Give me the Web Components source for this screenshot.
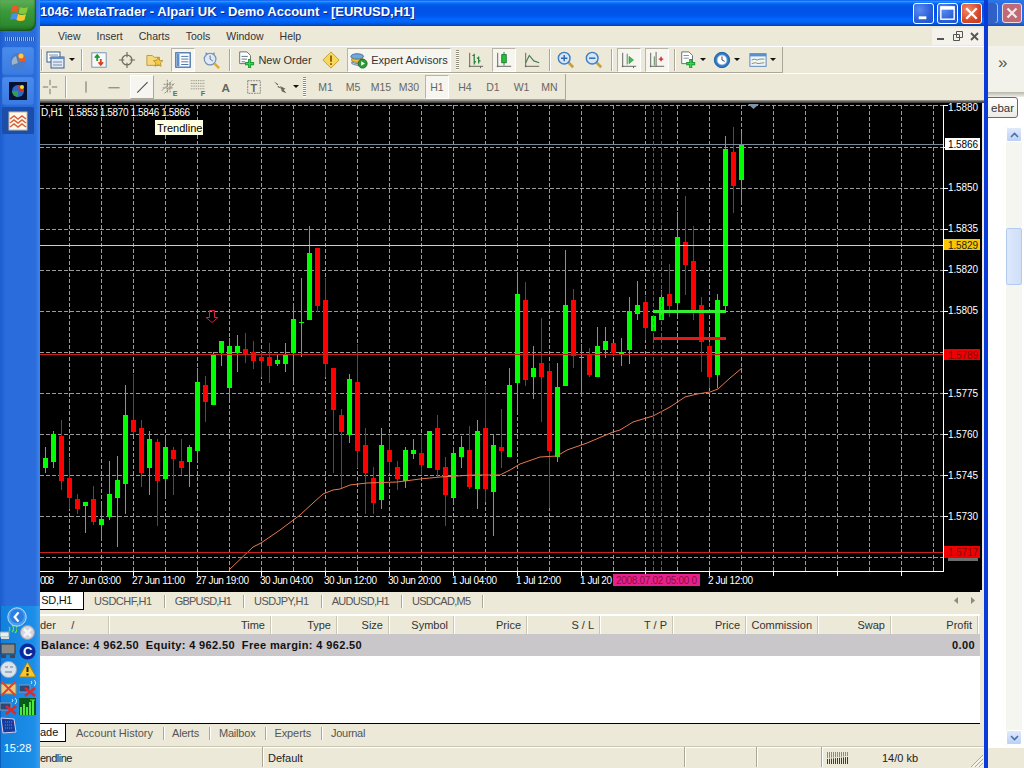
<!DOCTYPE html>
<html><head><meta charset="utf-8"><title>MetaTrader</title>
<style>
html,body{margin:0;padding:0;width:1024px;height:768px;overflow:hidden;background:#ece9d8;font:11px "Liberation Sans",Arial,sans-serif;color:#000}
</style></head><body>
<script>
const I={
profile:`<rect x="1" y="2" width="13" height="10" fill="#fff" stroke="#3b5f8f"/><path d="M3 5h9M3 8h9" stroke="#7a8aa0"/><rect x="5" y="7" width="13" height="11" fill="#dfeaf8" stroke="#3b5f8f"/><rect x="5" y="7" width="13" height="2" fill="#5b8fd0"/><path d="M7 12h9M7 15h9" stroke="#7a8aa0"/>`,
market:`<rect x="2" y="2" width="16" height="16" fill="#f8f8f4" stroke="#6c8fb8"/><path d="M8 11V5M5.5 7.5L8 4.5l2.5 3" stroke="#1d9a3a" stroke-width="2" fill="none"/><path d="M12 9v6M9.5 12.5L12 15.5l2.5-3" stroke="#d8402a" stroke-width="2" fill="none"/>`,
cross:`<circle cx="10" cy="10" r="5.5" fill="none" stroke="#6d6d64" stroke-width="1.4"/><path d="M10 1v6M10 13v6M1 10h6M13 10h6" stroke="#6d6d64" stroke-width="1.3"/>`,
nav:`<path d="M1 5h6l2 2h6v9H1z" fill="#f6d97a" stroke="#b8963a"/><path d="M13.5 7l1.6 3.4 3.7.4-2.8 2.5.8 3.7-3.3-1.9-3.3 1.9.8-3.7L8.2 10.800l3.700-.4z" fill="#f6c93c" stroke="#a8842a" stroke-width=".8"/>`,
term:`<rect x="2" y="2" width="16" height="16" fill="#fff" stroke="#3f6ea8" stroke-width="1.4"/><rect x="3" y="3" width="3" height="14" fill="#5f8fc8"/><path d="M8 6h8M8 9h8M8 12h8M8 15h8" stroke="#3f6ea8"/>`,
tester:`<circle cx="9" cy="9" r="6.500" fill="#dfe8f4" stroke="#7090b8" stroke-width="1.300"/><path d="M9 5v4l3 2" stroke="#4a6a90" fill="none"/><path d="M4 2l2 2M14 2l-2 2" stroke="#7090b8" stroke-width="1.500"/><path d="M14 14l5 5" stroke="#d9a93a" stroke-width="2.500"/>`,
neworder:`<path d="M3 1h8l4 4v9H3z" fill="#fff" stroke="#5a6a70"/><path d="M5 6h7M5 9h6M5 12h4" stroke="#5a6a70"/><path d="M14 9v10M9 14h10" stroke="#1c9a34" stroke-width="3.400"/><path d="M14 10v8M10 14h8" stroke="#38d84e" stroke-width="1.400"/>`,
diamond:`<path d="M10 1l9 9-9 9-9-9z" fill="#f8d85a" stroke="#c59a2a"/><path d="M10 5v7" stroke="#8a5a10" stroke-width="2"/><rect x="9" y="13.500" width="2" height="2" fill="#8a5a10"/>`,
ea:`<ellipse cx="8" cy="6" rx="7" ry="3" fill="#6fa8dc" stroke="#3a6a9a"/><path d="M2 8c3 2 9 2 12 0v3c-3 2-9 2-12 0z" fill="#f1c63c" stroke="#a8842a"/><path d="M2 12c3 2 7 2 8 2v2c-3 0-6-1-8-2z" fill="#c9d6e4" stroke="#5a7a9a"/><circle cx="14" cy="14" r="5" fill="#2c9a38" stroke="#1d6a28"/><path d="M12.500 11.500v5l4-2.500z" fill="#fff"/>`,
bars:`<path d="M2 17h16M3 2v16M15 17v2" stroke="#5a5a50"/><path d="M8 3v12M6 5h2M8 12h2M13 6v8M11 8h2M13 11h2" stroke="#1c7a30" stroke-width="1.300"/>`,
candle:`<path d="M2 17h16M3 2v16" stroke="#5a5a50"/><path d="M10 1v15" stroke="#1c7a30"/><rect x="7.500" y="4" width="5" height="9" fill="#28c038" stroke="#1c7a30"/>`,
line:`<path d="M2 17h16M3 2v16" stroke="#5a5a50"/><path d="M3 13l4-8 5 6 6 2" stroke="#4a7a50" fill="none" stroke-width="1.300"/>`,
zin:`<path d="M12 12l6 6" stroke="#c8a238" stroke-width="3"/><circle cx="8" cy="8" r="6.500" fill="#d4e6f8" stroke="#3f7fc0" stroke-width="1.600"/><path d="M4.500 8h7M8 4.500v7" stroke="#2a68a8" stroke-width="1.600"/>`,
zout:`<path d="M12 12l6 6" stroke="#c8a238" stroke-width="3"/><circle cx="8" cy="8" r="6.500" fill="#d4e6f8" stroke="#3f7fc0" stroke-width="1.600"/><path d="M4.500 8h7" stroke="#2a68a8" stroke-width="1.600"/>`,
auto:`<path d="M2 17h16M3 2v16M15 17v2" stroke="#5a5a50"/><path d="M8 3v12" stroke="#4a7a50"/><path d="M10 6l5 4-5 4z" fill="#3cc04a" stroke="#1c7a30" stroke-width=".6"/>`,
shift:`<path d="M2 17h16M3 2v16M9 1v16" stroke="#5a5a50"/><path d="M7 6v10" stroke="#4a7a50"/><path d="M12 9h5M14.500 6.500v5" stroke="#d02a20" stroke-width="1.600"/>`,
newch:`<path d="M3 1h8l4 4v9H3z" fill="#fff" stroke="#5a6a70"/><path d="M5 5h6M5 8h6" stroke="#7a8a90"/><path d="M13 9v10M8 14h10" stroke="#1c9a34" stroke-width="3.400"/><path d="M13 10v8M9 14h8" stroke="#38d84e" stroke-width="1.400"/>`,
clock:`<circle cx="10" cy="10" r="8.500" fill="#2e78c8" stroke="#1c5a9c"/><circle cx="10" cy="10" r="5.500" fill="#fff" stroke="#8fb4dc"/><path d="M10 6v4l3 1.500" stroke="#333" fill="none"/>`,
templ:`<rect x="1" y="3" width="18" height="14" fill="#eef4fb" stroke="#4f7fb8"/><rect x="1" y="3" width="18" height="3" fill="#5a8fd0"/><path d="M3 10l3-1 3 1 3-1 5 0" stroke="#4aa050" fill="none"/><path d="M3 14l4-1 3 1 7-1" stroke="#a08040" fill="none"/>`,
hair:`<path d="M10 2v6M10 12v6M2 10h6M12 10h6" stroke="#6a6a60"/>`,
vline:`<path d="M10 3v14" stroke="#6a6a60" stroke-width="1.200"/>`,
hline:`<path d="M3 11h14" stroke="#6a6a60" stroke-width="1.200"/>`,
tline:`<path d="M4 17L17 4" stroke="#4a4a44" stroke-width="1.300"/>`,
chan:`<path d="M1 14L12 3M4 17L15 6M7 2v14M10 5v12M3 7h11M2 11h11" stroke="#7a7a70" stroke-dasharray="2 1" fill="none"/><text x="13" y="20" font-size="8" font-weight="bold" fill="#666" font-family="Liberation Sans">E</text>`,
fibo:`<path d="M2 3h15M2 6h15M2 9h15M2 12h15" stroke="#7a7a70" stroke-dasharray="1 1"/><text x="13" y="20" font-size="8" font-weight="bold" fill="#666" font-family="Liberation Sans">F</text>`,
aa:`<text x="5" y="16" font-size="13" font-weight="bold" fill="#66665e" font-family="Liberation Sans">A</text>`,
tt:`<rect x="3" y="3" width="14" height="14" fill="none" stroke="#7a7a70" stroke-dasharray="2 1"/><text x="6" y="15" font-size="12" font-weight="bold" fill="#66665e" font-family="Liberation Sans">T</text>`,
arrows:`<path d="M2 4l5 3-1 1 5 4-5-2 1-1z" fill="#55554d"/><path d="M9 9l6 3-2 1 3 4-5-2z" fill="#6a6a60"/>`
};
const svg=(n,s=20)=>`<svg width="${s}" height="${s}" viewBox="0 0 20 20" style="display:block;overflow:visible">${I[n]}</svg>`;
const def=(tag,render)=>customElements.define(tag,class extends HTMLElement{connectedCallback(){if(this.shadowRoot)return;this.attachShadow({mode:'open'}).innerHTML=render(this)}});

/* ---------- toolbar parts ---------- */
def('tb-btn',e=>{const w=e.getAttribute('w')||28,st=e.getAttribute('state')||'';return `<style>
:host{display:block;flex:none;width:${w}px;height:26px;box-sizing:border-box;padding:1px 2px}
.b{height:24px;box-sizing:border-box;display:flex;align-items:center;justify-content:center;gap:3px;color:${e.hasAttribute('dim')?'#666':'#333'};font-size:${e.hasAttribute('dim')?'10.5px':'11px'};border:1px solid transparent}
.on{background:#f6f5ef;border-color:#b9b5a4 #fff #fff #b9b5a4}
.hot{background:#f6f5ef;border-color:#fff #aca899 #aca899 #fff}
i{width:0;height:0;border:3px solid transparent;border-top:3px solid #111;border-bottom:0}
</style><div class="b ${st}">${e.getAttribute('icon')?svg(e.getAttribute('icon'),+(e.getAttribute('s')||18)):''}<slot></slot>${e.hasAttribute('drop')?'<i></i>':''}</div>`});
def('tb-sep',e=>`<style>:host{display:block;flex:none;width:${e.getAttribute('w')||6}px;height:26px;position:relative}
b{display:block;width:1px;height:22px;margin:2px auto;background:#aca899;box-shadow:1px 0 #fff}</style><b></b>`);
def('tb-grip',()=>`<style>:host{display:block;flex:none;width:6px;height:26px;box-sizing:border-box;padding:3px 1px}
b{display:block;width:3px;height:20px;background:repeating-linear-gradient(180deg,#8f8c7e 0 1px,#fff 1px 2px)}</style><b></b>`);
def('tb-gap',e=>`<style>:host{display:block;flex:none;width:${e.getAttribute('w')}px}</style>`);
def('tool-bar',e=>`<style>:host{display:block;height:27px;border-top:1px solid #fff;background:#ece9d8;box-sizing:border-box}
.r{display:flex;align-items:center;height:26px;width:${e.getAttribute('w')}px;box-sizing:border-box;border-right:1px solid #aca899;border-bottom:1px solid #aca899}</style><div class="r"><slot></slot></div>`);

/* ---------- window chrome ---------- */
def('cap-btn',e=>{const k=e.getAttribute('k');const g={min:'<rect x="5" y="13" width="8" height="3" fill="#fff"/>',max:'<rect x="3" y="3" width="14" height="13" fill="none" stroke="#fff" stroke-width="1.500"/><rect x="3" y="3" width="14" height="3" fill="#fff"/>',close:'<path d="M4.500 4.500l11 11M15.500 4.500l-11 11" stroke="#fff" stroke-width="2.500"/>'}[k];
return `<style>:host{display:block;flex:none;width:21px;height:21px;box-sizing:border-box;border:1px solid #fff;border-radius:3px;background:${k=='close'?'radial-gradient(circle at 30% 30%,#ee8a68,#d5482a 60%,#c23a1c)':'radial-gradient(circle at 30% 30%,#5a8cf0,#2a5fd8 60%,#2050c8)'}}svg{display:block}</style><svg width="19" height="19" viewBox="0 0 20 20">${g}</svg>`});
def('title-bar',()=>`<style>:host{display:flex;align-items:center;height:26px;box-sizing:border-box;padding:0 2px 3px 0;background:linear-gradient(180deg,#0058ee 0%,#3593ff 5%,#127dff 9%,#0262ee 15%,#0054e3 25%,#0055eb 56%,#005bf5 66%,#026afe 76%,#0062ef 86%,#0052d6 93%,#003f9f 100%)}
.t{flex:1;font:bold 13px "Liberation Sans",sans-serif;color:#fff;text-shadow:1px 1px #0a2a8a;white-space:nowrap}.c{display:flex;gap:3px;margin-top:3px}</style>
<div class="t"><slot></slot></div><div class="c"><cap-btn k="min"></cap-btn><cap-btn k="max"></cap-btn><cap-btn k="close"></cap-btn></div>`);
def('menu-bar',()=>`<style>:host{display:flex;height:20px;background:#ece9d8;align-items:center;box-sizing:border-box;color:#333;font-size:10.5px}
.m{display:flex;flex:1}.c{display:flex;margin-right:1px}
b{display:flex;width:17px;height:17px;background:#f4f2ea;align-items:center;justify-content:center}</style>
<div class="m"><slot></slot></div><div class="c">
<b><svg width="9" height="9"><rect x="1" y="6" width="7" height="2" fill="#555"/></svg></b>
<b><svg width="10" height="10"><path d="M3.500 .5h6v6h-6zM.5 3.500h6v6h-6z" fill="#f4f2ea" stroke="#555"/></svg></b>
<b><svg width="9" height="9"><path d="M1 1l7 7M8 1L1 8" stroke="#555" stroke-width="1.800"/></svg></b></div>`);
def('menu-item',e=>`<style>:host{display:block;flex:none;margin-left:${e.getAttribute('ml')||16}px}</style><slot></slot>`);

/* ---------- chart ---------- */
const C=`g 447 458 468 473|g 431 434 462 468|r 420 436 481 490|r 458 478 498 509|r 494 499 509 514|g 502 502 506 533|r 486 499 522 525|g 505 519 525 539|g 461 494 517 520|g 456 480 498 547|g 385 415 484 514|r 374 420 432 434|r 420 428 473 487|g 431 439 468 495|r 439 442 481 526|g 435 447 479 498|r 447 450 459 495|r 439 461 468 475|g 445 447 462 487|g 368 382 451 461|r 376 385 402 422|g 352 354 405 405|g 341 341 353 366|g 338 346 388 400|g 335 346 353 372|r 333 349 355 363|r 341 352 361 369|r 352 357 361 377|r 343 357 366 383|g 355 360 364 366|g 343 355 364 372|g 303 319 353 383|g 278 322 323 357|g 226 253 320 320|r 248 248 306 312|r 278 300 364 377|r 368 368 410 473|r 409 415 432 489|g 374 379 435 443|r 344 382 451 468|r 428 445 473 514|r 467 478 503 514|g 428 445 500 509|r 435 450 462 473|r 461 467 479 490|g 447 450 481 488|g 439 450 454 459|r 435 453 465 475|g 431 431 468 468|r 415 428 470 477|r 457 467 495 526|g 447 453 498 503|g 436 447 457 468|r 426 450 487 489|g 420 431 489 509|r 386 428 489 502|g 434 445 492 536|r 409 447 451 468|g 368 385 457 457|g 272 294 383 413|r 282 300 380 386|g 346 368 377 399|r 318 363 377 422|r 363 371 451 508|g 363 387 457 462|g 250 305 386 386|r 289 300 356 368|g 344 357 358 395|r 348 354 375 377|g 327 346 377 377|g 327 341 350 358|r 343 343 353 356|g 338 352 355 366|g 297 311 350 364|g 281 305 314 320|r 296 302 328 340|g 316 316 331 331|g 290 297 320 320|r 264 294 306 317|g 212 237 303 317|r 196 242 265 295|r 226 261 310 320|r 297 305 342 372|r 342 346 377 388|g 294 300 375 388|g 136 149 306 313|r 127 152 186 213|g 133 144 180 203`.split('|').map(s=>{const p=s.split(' ');return [p[0],...p.slice(1).map(Number)]});
const MA="229,570 253,547 261,543 280,530 300,515 313,503 323,494 333,490 340,489 350,485 367,483 397,482 420,479 440,477 473,475 500,475 510,470 520,464 540,457 557,456 567,450 587,443 613,432 620,430 633,422 653,416 670,407 685,397 697,394 710,392 718,389 730,378 742,368";
def('fx-chart',()=>{
 let s='';
 const ys=[105,147,188,229,270,311,352,393,434,475,516,557];
 const xs=[];for(let x=69;x<=933;x+=32)xs.push(x);
 s+=`<rect x="40" y="103" width="942" height="487" fill="#000"/>`;
 s+=`<g stroke="#9c9c9c" stroke-dasharray="4 2" shape-rendering="crispEdges">`;
 ys.forEach(y=>s+=`<line x1="40" x2="943" y1="${y+.5}" y2="${y+.5}"/>`);
 xs.forEach(x=>s+=`<line x1="${x+.5}" x2="${x+.5}" y1="105" y2="571"/>`);
 s+=`</g><g shape-rendering="crispEdges">`;
 C.forEach((c,i)=>{const x=45+8*i,col=c[0]=='g'?'#0f0':'#f00',w=c[0]=='g'?'#28d828':'#c81818';
  s+=`<rect x="${x}" y="${c[1]}" width="1" height="${c[4]-c[1]}" fill="${w}"/><rect x="${x-2}" y="${c[2]}" width="5" height="${Math.max(1,c[3]-c[2])}" fill="${col}"/>`});
 s+=`</g>`;
 s+=`<polyline points="${MA}" fill="none" stroke="#e87850" stroke-width="1"/>`;
 s+=`<g shape-rendering="crispEdges"><rect x="40" y="144" width="903" height="1" fill="#7a8a9a"/><rect x="40" y="245" width="903" height="1" fill="#f2d060"/><rect x="40" y="354" width="903" height="1" fill="#c82018"/><rect x="40" y="552" width="903" height="1" fill="#c82018"/>`;
 [653,661].forEach(x=>s+=`<line x1="${x+.5}" x2="${x+.5}" y1="105" y2="571" stroke="#f01a5c" stroke-dasharray="4 2"/>`);
 s+=`<rect x="653" y="310" width="73" height="3" fill="#33ee33"/><rect x="653" y="337" width="73" height="3" fill="#e81818"/>`;
 s+=`<rect x="943" y="105" width="1" height="467" fill="#fff"/><rect x="40" y="571" width="904" height="1" fill="#fff"/>`;
 ys.forEach(y=>s+=`<rect x="943" y="${y}" width="5" height="1" fill="#fff"/>`);
 xs.filter((x,i)=>!(i%2)).forEach(x=>s+=`<rect x="${x}" y="571" width="1" height="5" fill="#fff"/>`);
 s+=`</g>`;
 s+=`<path d="M209.500 310.500h5v7h3.500l-6 5-6-5h3.500z" fill="none" stroke="#d02040" stroke-width="1"/>`;
 s+=`<path d="M748 104h11l-5.500 5z" fill="#7f93a8"/>`;
 const T=(x,y,t,a={})=>`<text x="${x}" y="${y}" ${a.len?`textLength="${a.len}"`:''} fill="${a.f||'#fff'}" font-size="${a.s||10}">${t}</text>`;
 s+=`<g font-family="Liberation Sans">`;
 [['1.5880',111],['1.5850',191],['1.5835',232],['1.5820',273],['1.5805',314],['1.5775',397],['1.5760',438],['1.5745',479],['1.5730',520]].forEach(a=>s+=T(948,a[1],a[0],{len:30}));
 s+=`<rect x="945" y="138" width="35" height="12" fill="#fff"/>`+T(948,148,'1.5866',{f:'#000',len:30});
 s+=`<rect x="944" y="239" width="36" height="11" fill="#f7c800"/>`+T(948,249,'1.5829',{f:'#222',len:30});
 s+=`<rect x="944" y="349" width="36" height="11" fill="#f00000"/>`+T(948,359,'1.5789',{f:'#7a1010',len:30});
 s+=`<rect x="944" y="546" width="36" height="12" fill="#f00000"/>`+T(948,556,'1.5717',{f:'#7a1010',len:30});
 s+=`<rect x="948" y="558" width="30" height="3" fill="#c8c8c8" opacity=".55"/>`;
 [[40,'008',14],[68,'27 Jun 03:00',53],[132,'27 Jun 11:00',53],[196,'27 Jun 19:00',53],[260,'30 Jun 04:00',53],[324,'30 Jun 12:00',53],[388,'30 Jun 20:00',53],[452,'1 Jul 04:00',45],[516,'1 Jul 12:00',45],[580,'1 Jul 20',32],[708,'2 Jul 12:00',45]].forEach(a=>s+=T(a[0],584,a[1],{len:a[2]}));
 s+=`<rect x="613" y="574" width="87" height="12" fill="#e8208c"/>`+T(616,584,'2008.07.02 05:00 0',{f:'#8a1040',len:81});
 s+=T(41,116,'D,H1',{len:22})+T(69,116,'1.5853 1.5870 1.5846 1.5866',{len:121});
 s+=`<rect x="155" y="120" width="48" height="15" fill="#ffffe1"/>`+T(157,132,'Trendline',{f:'#000',s:11});
 s+=`</g>`;
 return `<style>:host{display:block;height:487px;position:relative}svg{display:block;overflow:visible}</style><svg width="944" height="487" viewBox="40 103 944 487">${s}</svg>`;
});

/* ---------- tabs ---------- */
def('tab-item',e=>{const a=e.hasAttribute('active');return a?`<style>:host{display:block;flex:none;width:${e.getAttribute('w')}px;height:18px;box-sizing:border-box;background:#fff;border-right:1px solid #000;border-bottom:1px solid #000;padding-right:${e.getAttribute('pr')||10}px;text-align:right;line-height:17px;white-space:nowrap;color:#111;letter-spacing:${e.getAttribute('ls')||0}px}</style><slot></slot>`
:`<style>:host{display:block;flex:none;color:#555;padding:0 ${e.getAttribute('pr')||10}px 0 ${e.getAttribute('pl')||10}px;white-space:nowrap;line-height:13px;margin-top:3px;height:13px;border-right:1px solid #aca899;box-shadow:1px 0 #fff;letter-spacing:${e.getAttribute('ls')||0}px}</style><slot></slot>`});
def('tab-strip',e=>`<style>:host{display:flex;box-sizing:border-box;height:${e.getAttribute('h')}px;width:940px;border-top:${e.getAttribute('bt')||2}px solid #000;background:#ece9d8;position:relative}
.a{position:absolute;right:5px;top:5px;display:flex;gap:13px}</style><slot></slot>${e.hasAttribute('arrows')?'<div class="a"><svg width="4" height="7"><path d="M4 0v7L0 3.500z" fill="#8d8b80"/></svg><svg width="4" height="7"><path d="M0 0v7l4-3.500z" fill="#8d8b80"/></svg></div>':''}`);

/* ---------- terminal table ---------- */
def('col-head',e=>`<style>:host{display:block;box-sizing:border-box;height:18px;line-height:18px;padding:0 5px 0 0;text-align:${e.getAttribute('left')!=null?'left':'right'};border-right:1px solid #c9c6b5;box-shadow:1px 0 #fff;color:#333;white-space:pre;overflow:hidden}</style><slot></slot>`);
def('term-table',()=>`<style>:host{display:block;width:940px;background:#fff}
.h{display:grid;grid-template-columns:69px 162px 66px 52px 65px 73px 73px 73px 73px 72px 73px 87px;background:#ece9d8;border-top:2px solid #fff;height:18px}
.b{height:22px;background:#c9c7c9;display:flex;justify-content:space-between;align-items:center;font-weight:bold;padding:0 5px 0 1px;white-space:pre;color:#111;letter-spacing:.37px}
.e{height:67px}</style>
<div class="h"><col-head left>der     /</col-head><col-head>Time</col-head><col-head>Type</col-head><col-head>Size</col-head><col-head>Symbol</col-head><col-head>Price</col-head><col-head>S / L</col-head><col-head>T / P</col-head><col-head>Price</col-head><col-head>Commission</col-head><col-head>Swap</col-head><col-head>Profit</col-head></div>
<div class="b"><span>Balance: 4 962.50  Equity: 4 962.50  Free margin: 4 962.50</span><span>0.00</span></div><div class="e"></div>`);

/* ---------- status bar ---------- */
def('st-cell',e=>`<style>:host{display:flex;flex:none;align-items:center;box-sizing:border-box;width:${e.getAttribute('w')}px;height:20px;padding:1px 0 0 ${e.getAttribute('pl')||5}px;border-right:1px solid #aca899;box-shadow:1px 0 #fff;color:#222;white-space:nowrap;letter-spacing:${e.getAttribute('ls')||0}px}</style><slot></slot>`);
def('status-bar',()=>{let bars='';for(let i=0;i<11;i++){const x=i*2;bars+=`<rect x="${x}" y="0" width="1" height="${6-i*.2}" fill="#88a800"/><rect x="${x}" y="${6-i*.2+1}" width="1" height="${5+i*.2}" fill="#0a4a78"/>`}
return `<style>:host{display:flex;height:22px;background:#ece9d8;border-top:1px solid #c9c6b5;box-shadow:inset 0 1px #fff;box-sizing:border-box;position:relative;width:944px}
.k{display:flex;align-items:center;padding:1px 0 0 5px;flex:none;width:162px;box-sizing:border-box}.k span{margin-left:32px;color:#222}
svg.g{position:absolute;right:0;bottom:0}</style>
<st-cell w="223" pl="0" ls="-.5">endline</st-cell><st-cell w="422">Default</st-cell><st-cell w="72"></st-cell><st-cell w="65"></st-cell>
<div class="k"><svg width="23" height="12">${bars}</svg><span>14/0 kb</span></div>
<svg class="g" width="14" height="14"><path d="M13 1L1 13M13 5L5 13M13 9L9 13" stroke="#aca899"/><path d="M13 2.500L2.500 13M13 6.500L6.500 13M13 10.500L10.500 13" stroke="#fff"/></svg>`});

/* ---------- main window ---------- */
def('mt-window',()=>`<style>:host{display:flex;flex-direction:column;flex:none;width:948px;height:768px;box-sizing:border-box;border-right:4px solid #0a3ad8;background:#ece9d8}</style><slot></slot>`);

/* ---------- taskbar ---------- */
def('start-btn',()=>`<style>:host{display:block;height:31px;width:36px;box-sizing:border-box;border-radius:0 0 8px 0;background:linear-gradient(180deg,#5fae58,#3b9a3b 35%,#2d8a2f 80%,#206a22);box-shadow:inset -1px -1px 2px #174f18;position:relative}
svg{position:absolute;left:10px;top:3px}</style><svg width="20" height="22" viewBox="0 0 20 22"><path d="M2 4c3-2 5-1 7 0l-1.500 6c-2-1-4-1.500-7 0z" fill="#e85a2a"/><path d="M10 4c2 1 5 1.500 8 0l-1.500 6c-3 1.500-6 1-8 0z" fill="#88c83a"/><path d="M0 11c3-1.500 5-1 7 0l-1.500 6c-2-1-4-1.500-7 0z" fill="#4a90e0" transform="translate(1.500 0)"/><path d="M8 11c2 1 5 1.500 8 0l-1.500 6c-3 1.500-6 1-8 0z" fill="#f5c832"/></svg>`);
def('ql-tile',e=>`<style>:host{display:flex;align-items:center;justify-content:center;width:32px;height:${e.hasAttribute('on')?27:28}px;margin:0 0 2px 2px;border-radius:2px;background:${e.hasAttribute('on')?'linear-gradient(180deg,#1a4ea8,#1d4fa8)':'linear-gradient(180deg,#4a8cec,#3a7be2)'};box-shadow:inset 0 0 1px #1a4ea8}</style><slot></slot>`);
def('tray-ic',e=>`<style>:host{display:block;width:17px;height:17px;flex:none}</style><svg width="17" height="17" viewBox="0 0 17 17" style="display:block">${{
net:'<rect x="0" y="8" width="9" height="5" fill="#e8eef8" stroke="#8aa"/><rect x="1" y="13" width="8" height="2" fill="#ddd"/><path d="M9 7c1-1 1-3 0-4M12 8c2-2 2-5 0-7M15 9c3-3 3-7 0-9" stroke="#6ce03c" fill="none" stroke-width="1.400"/>',
gx:'<circle cx="8.500" cy="8.500" r="7" fill="#d4d4dc" stroke="#9a9aa8"/><path d="M5 5l7 7M12 5l-7 7" stroke="#f4f4f8" stroke-width="2.500"/>',
mon:'<rect x="1" y="1" width="14" height="10" fill="#8a8a8a" stroke="#333"/><rect x="1" y="12" width="5" height="3" fill="#445"/><rect x="10" y="12" width="5" height="3" fill="#445"/>',
c:'<circle cx="8.500" cy="8.500" r="8" fill="#0a2a9c"/><text x="4" y="13" font-size="13" font-weight="bold" fill="#fff" font-family="Liberation Sans">C</text>',
face:'<circle cx="8.500" cy="8.500" r="8" fill="#d8e4f0" stroke="#9ab"/><path d="M5 6h3M10 6h3M5 11h7" stroke="#777"/>',
warn:'<path d="M8.500 1L17 16H0z" fill="#f6c828" stroke="#a88018"/><path d="M8.500 6v5" stroke="#222" stroke-width="2"/><rect x="7.500" y="12.500" width="2" height="2" fill="#222"/>',
xmail:'<rect x="1" y="4" width="15" height="10" fill="#e8c880" stroke="#886"/><path d="M1 1l15 15M16 1L1 16" stroke="#e8402a" stroke-width="2"/>',
netx:'<rect x="0" y="5" width="11" height="7" fill="#304878" stroke="#89a"/><path d="M12 4c1-1 1-2 0-3M15 6c2-2 2-4 0-6" stroke="#cfe" fill="none"/><path d="M6 8l10 8M16 8L6 16" stroke="#e0282a" stroke-width="2.400"/>',
bars:'<rect width="17" height="17" fill="#0a5a18"/><path d="M2 17V9M5 17V6M8 17V9M11 17V4M14 17V2" stroke="#4ce83c" stroke-width="2"/><path d="M11 2h5" stroke="#4ce83c"/>',
tab:'<path d="M1 1l13 1 2 13-13 1z" fill="#143c9c" stroke="#dce" stroke-width="1"/><path d="M5 5h7M5 8h7M5 11h7" stroke="#6a8ce0" stroke-dasharray="1 1"/>'}[e.getAttribute('k')]}</svg>`);
def('xp-taskbar',()=>`<style>:host{display:flex;flex-direction:column;flex:none;width:40px;height:768px;position:relative;z-index:2;background:linear-gradient(90deg,#1b5dcf,#2a6cdc 15%,#2a6cdc 88%,#3c86ee)}
.grip{height:4px;margin:6px 5px 6px 5px;background:repeating-linear-gradient(90deg,#8fb8f0 0 1px,#1b4fb0 1px 2px)}
.ql{flex:1}
.tray{height:162px;background:linear-gradient(90deg,#1280dc,#1c8ee8 85%,#3a9cf0);display:flex;flex-direction:column;color:#fff;box-shadow:inset 1px 0 #0b5ec0}
.go{height:18px;position:relative;flex:none}
.go svg{position:absolute;left:7px;top:1px}
.row{display:flex;gap:2px;width:36px;height:18.5px;flex:none}
.clock{margin-top:auto;height:26px;line-height:12px;font-size:11px;text-align:center;padding-right:5px}
</style><start-btn></start-btn><div class="grip"></div><div class="ql">
<ql-tile><svg width="20" height="20" viewBox="0 0 20 20"><circle cx="10" cy="10" r="8" fill="#4a7cc8"/><path d="M10 2a8 8 0 0 1 8 8l-7 1z" fill="#e85a2a"/><path d="M4 14a7 7 0 0 1 4-9l2 7z" fill="#9ab4c8"/><circle cx="13" cy="5" r="2.500" fill="#f0d040"/></svg></ql-tile>
<ql-tile><svg width="20" height="20" viewBox="0 0 20 20"><rect x="1" y="1" width="18" height="18" fill="#061030"/><circle cx="10" cy="10" r="6" fill="#2a6ac8"/><path d="M10 4a6 6 0 0 1 6 6h-5z" fill="#d83028"/><path d="M4 10h6v6a6 6 0 0 1-6-6z" fill="#30a048"/><circle cx="14" cy="6" r="2" fill="#e8e040"/></svg></ql-tile>
<ql-tile on><svg width="20" height="20" viewBox="0 0 20 20"><rect x="1" y="1" width="18" height="18" fill="#fff8ec" stroke="#c8b8a0"/><path d="M2 8l4-3 4 3 4-3 4 3M2 12l4-3 4 3 4-3 4 3M2 16l4-3 4 3 4-3 4 3" stroke="#d8603a" stroke-width="1.500" fill="none"/></svg></ql-tile>
</div>
<div class="tray"><div class="go"><svg width="20" height="20" viewBox="0 0 26 26"><circle cx="13" cy="13" r="12" fill="#4aa0f0" stroke="#dfeeff"/><circle cx="13" cy="12" r="9" fill="#2c7ee0"/><path d="M15 7l-5 6 5 6" stroke="#fff" stroke-width="3" fill="none"/></svg></div>
<div class="row"><tray-ic k="net"></tray-ic><tray-ic k="gx"></tray-ic></div>
<div class="row"><tray-ic k="mon"></tray-ic><tray-ic k="c"></tray-ic></div>
<div class="row"><tray-ic k="face"></tray-ic><tray-ic k="warn"></tray-ic></div>
<div class="row"><tray-ic k="xmail"></tray-ic><tray-ic k="netx"></tray-ic></div>
<div class="row"><tray-ic k="netx"></tray-ic><tray-ic k="bars"></tray-ic></div>
<div class="row"><tray-ic k="tab"></tray-ic></div>
<div class="clock">15:28</div></div>`);

/* ---------- window behind ---------- */
def('bg-window',()=>`<style>:host{display:flex;flex-direction:column;flex:1;height:768px;min-width:0;background:#fff;overflow:hidden}
.t{height:26px;display:flex;align-items:flex-start;background:linear-gradient(180deg,#2a78e8,#2a6ce0 15%,#2a6ce0 85%,#1a50b0);padding-top:3px;box-sizing:border-box}
.r{width:10px;height:20px;background:#2f60c8;border-radius:0 3px 3px 0;box-shadow:inset -1px 0 #a8c0f0}
.x{width:20px;height:20px;border:1px solid #e8dcdc;border-radius:3px;box-sizing:border-box;background:#c06a78;margin-left:4px}
.m{height:20px;background:#ece9d8}
.tb{height:46px;background:#f3f2ea;display:flex;align-items:center;font-size:17px;color:#555;padding:0 0 12px 10px;box-sizing:border-box}
.s{height:5px;background:linear-gradient(180deg,#b8b7ae,#f0efe6)}
.p{flex:1;display:flex;justify-content:flex-end;position:relative}
.btn{position:absolute;left:-4px;top:0;width:34px;height:21px;box-sizing:border-box;border:1px solid #7b5b8a;border-radius:3px;background:linear-gradient(180deg,#fff,#ecebe4);padding-left:6px;line-height:20px;font-size:11.5px;color:#333}
.sb{width:16px;margin:30px 2px 0 0;height:618px;background:#f6f6f0;display:flex;flex-direction:column;justify-content:space-between;position:relative}
.ar{height:15px;background:linear-gradient(180deg,#dfe9fb,#bcd0f4);border:1px solid #fff;border-radius:2px;box-sizing:border-box;display:flex;align-items:center;justify-content:center}
.th{position:absolute;left:0;right:0;top:101px;height:57px;background:linear-gradient(90deg,#dce8fb,#cfdff8);border:1px solid #b4cbf0;border-radius:2px;box-sizing:border-box}
.f{height:20px;background:#ece9d8;flex:none}</style>
<div class="t"><div class="r"></div><div class="x"><svg width="18" height="18" viewBox="0 0 20 20"><path d="M5 5l10 10M15 5L5 15" stroke="#f4eaea" stroke-width="2.500"/></svg></div></div>
<div class="m"></div><div class="tb">»</div><div class="s"></div>
<div class="p"><div class="btn">ebar</div><div class="sb"><div class="ar"><svg width="9" height="6"><path d="M1 5l3.500-3.500L8 5" stroke="#4a6ea8" stroke-width="1.600" fill="none"/></svg></div><div class="th"></div><div class="ar"><svg width="9" height="6"><path d="M1 1l3.500 3.500L8 1" stroke="#4a6ea8" stroke-width="1.600" fill="none"/></svg></div></div></div>
<div class="f"></div>`);
def('desk-app',()=>`<style>:host{display:flex;width:1024px;height:768px;overflow:hidden}</style><slot></slot>`);
def('dark-rule',()=>`<style>:host{display:block;height:3px;background:linear-gradient(180deg,#a8a69c,#666460 50%,#333)}</style>`);
</script>

<desk-app>
 <xp-taskbar></xp-taskbar>
 <mt-window>
  <title-bar>1046: MetaTrader - Alpari UK - Demo Account - [EURUSD,H1]</title-bar>
  <menu-bar>
   <menu-item ml="0">&nbsp;</menu-item><menu-item ml="15">View</menu-item><menu-item>Insert</menu-item><menu-item>Charts</menu-item><menu-item>Tools</menu-item><menu-item>Window</menu-item><menu-item>Help</menu-item>
  </menu-bar>
  <tool-bar w="743">
   <tb-sep w="3"></tb-sep><tb-btn w="35" icon="profile" s="20" drop></tb-btn><tb-sep></tb-sep><tb-gap w="1"></tb-gap>
   <tb-btn icon="market"></tb-btn><tb-btn icon="cross"></tb-btn><tb-btn icon="nav"></tb-btn><tb-btn icon="term" state="on"></tb-btn><tb-btn icon="tester"></tb-btn>
   <tb-gap w="1"></tb-gap><tb-sep></tb-sep>
   <tb-btn w="85" icon="neworder">New Order</tb-btn><tb-btn icon="diamond"></tb-btn>
   <tb-btn w="108" icon="ea" state="on">Expert Advisors</tb-btn><tb-gap w="2"></tb-gap><tb-grip></tb-grip><tb-gap w="1"></tb-gap>
   <tb-btn icon="bars"></tb-btn><tb-btn icon="candle" state="on"></tb-btn><tb-btn icon="line"></tb-btn><tb-sep></tb-sep>
   <tb-btn icon="zin"></tb-btn><tb-btn icon="zout"></tb-btn><tb-sep w="7"></tb-sep>
   <tb-btn icon="auto" state="on"></tb-btn><tb-btn icon="shift" state="on"></tb-btn><tb-sep></tb-sep>
   <tb-btn w="31" icon="newch" drop></tb-btn><tb-gap w="2"></tb-gap><tb-btn w="33" icon="clock" drop></tb-btn><tb-gap w="4"></tb-gap><tb-btn w="31" icon="templ" drop></tb-btn>
  </tool-bar>
  <tool-bar w="526">
   <tb-btn w="19" icon="hair"></tb-btn><tb-sep w="13"></tb-sep>
   <tb-btn icon="vline" s="16"></tb-btn><tb-btn icon="hline" s="16"></tb-btn><tb-btn icon="tline" state="hot" s="16"></tb-btn>
   <tb-btn icon="chan"></tb-btn><tb-btn icon="fibo"></tb-btn><tb-btn icon="aa"></tb-btn><tb-btn icon="tt"></tb-btn><tb-btn w="34" icon="arrows" drop></tb-btn>
   <tb-grip></tb-grip><tb-gap w="4"></tb-gap><tb-btn w="27" dim>M1</tb-btn><tb-btn dim>M5</tb-btn><tb-btn dim>M15</tb-btn><tb-btn dim>M30</tb-btn><tb-btn dim state="on">H1</tb-btn><tb-btn dim>H4</tb-btn><tb-btn dim>D1</tb-btn><tb-btn w="29" dim>W1</tb-btn><tb-btn w="27" dim>MN</tb-btn>
  </tool-bar>
  <dark-rule></dark-rule>
  <fx-chart></fx-chart>
  <tab-strip h="24" arrows>
    <tab-item active w="44" pr="11" ls="-.35">SD,H1</tab-item>
    <tab-item ls="-.45" pr="12">USDCHF,H1</tab-item><tab-item ls="-.8" pr="12">GBPUSD,H1</tab-item><tab-item ls="-.5" pr="12">USDJPY,H1</tab-item><tab-item ls="-.7" pr="12">AUDUSD,H1</tab-item><tab-item ls="-.7" pr="12">USDCAD,M5</tab-item>
  </tab-strip>
  <term-table></term-table>
  <tab-strip h="23" bt="1">
    <tab-item active w="26" pr="10">ade</tab-item>
    <tab-item>Account History</tab-item><tab-item pl="8" ls="-.2">Alerts</tab-item><tab-item pl="9" ls="-.2">Mailbox</tab-item><tab-item pl="8" ls="-.1">Experts</tab-item><tab-item pl="9" style="border:0;box-shadow:none" ls="-.3">Journal</tab-item>
  </tab-strip>
  <status-bar></status-bar>
 </mt-window>
 <bg-window></bg-window>
</desk-app>
</body></html>
